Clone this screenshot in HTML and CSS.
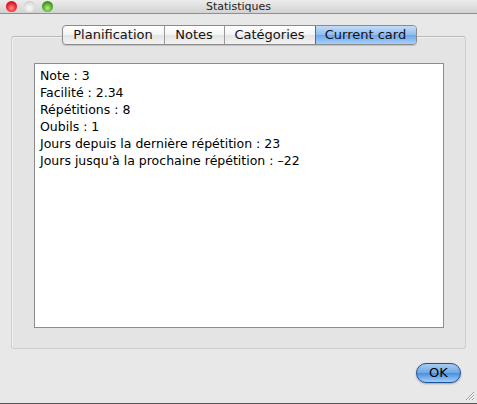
FILE: index.html
```html
<!DOCTYPE html>
<html>
<head>
<meta charset="utf-8">
<link rel="stylesheet" href="styles.css">
</head>
<body>
<div class="window">
  <div class="titlebar">
    <div class="lights">
      <span class="light red"></span>
      <span class="light gray"></span>
      <span class="light green"></span>
    </div>
    <div class="title">Statistiques</div>
  </div>
  <div class="body">
    <div class="tabs">
      <div class="tab t1">Planification</div>
      <div class="tab t2">Notes</div>
      <div class="tab t3">Catégories</div>
      <div class="tab t4 active">Current card</div>
    </div>
    <div class="group">
      <div class="textarea">
        <div>Note : 3</div>
        <div>Facilité : 2.34</div>
        <div>Répétitions : 8</div>
        <div>Oubils : 1</div>
        <div>Jours depuis la dernière répétition : 23</div>
        <div>Jours jusqu'à la prochaine répétition : –22</div>
      </div>
    </div>
    <div class="footer">
      <button class="ok">OK</button>
    </div>
  </div>
  <div class="grip">
    <svg width="12" height="12" viewBox="0 0 12 12">
      <path d="M11 3 L3 11 M11 6 L6 11 M11 9 L9 11" stroke="#9a9a9a" stroke-width="1" fill="none"/>
      <path d="M11 4 L4 11 M11 7 L7 11 M11 10 L10 11" stroke="#ffffff" stroke-width="1" fill="none"/>
    </svg>
  </div>
</div>
</body>
</html>
```

FILE: styles.css
```css
* { box-sizing: border-box; }
html, body { margin: 0; padding: 0; }
body {
  width: 477px;
  height: 404px;
  overflow: hidden;
  background: #e8e8e8;
  font-family: "DejaVu Sans", "Liberation Sans", sans-serif;
  font-size: 12px;
  color: #000;
}
.window {
  position: relative;
  width: 477px;
  height: 404px;
  display: flex;
  flex-direction: column;
  border-bottom: 1px solid #555;
}
.titlebar {
  height: 14px;
  background: linear-gradient(#ececec, #d2d2d2);
  border-bottom: 1px solid #8f8f8f;
  display: flex;
  align-items: center;
  position: relative;
}
.lights {
  display: flex;
  gap: 7px;
  padding-left: 6px;
}
.light {
  width: 11px;
  height: 11px;
  border-radius: 50%;
  display: block;
}
.red { background: radial-gradient(circle at 50% 65%, #ff8a8a 0%, #e0222a 55%, #9a0c10 100%); }
.gray { background: radial-gradient(circle at 50% 65%, #fafafa 0%, #dedede 60%, #a8a8a8 100%); }
.green { background: radial-gradient(circle at 50% 65%, #b8f07a 0%, #4ca42a 55%, #256a10 100%); }
.title {
  position: absolute;
  left: 0;
  right: 0;
  top: 0;
  text-align: center;
  font-size: 11px;
  line-height: 13px;
  color: #222;
}
.body {
  flex: 1;
  display: flex;
  flex-direction: column;
  padding: 11px 11px 0 11px;
}
.tabs {
  display: flex;
  align-self: center;
  height: 20px;
  margin-left: 1px;
  position: relative;
  z-index: 2;
  border: 1px solid #8a8a8a;
  border-radius: 4px;
  background: linear-gradient(#ffffff, #f3f3f3 50%, #e4e4e4 51%, #f2f2f2);
  box-shadow: 0 1px 1px rgba(0,0,0,0.15);
  overflow: hidden;
}
.tab {
  font-size: 13px;
  line-height: 18px;
  text-align: center;
  border-left: 1px solid #9a9a9a;
  color: #111;
}
.t1 { width: 101px; border-left: none; }
.t2 { width: 60px; }
.t3 { width: 91px; }
.t4 { width: 101px; }
.tab.active {
  background: linear-gradient(#c3dcf8, #8fbcf0 50%, #6ea7ec 51%, #a5d0fa);
  border-left: 1px solid #3d6fb8;
}
.group {
  margin-top: -9px;
  height: 313px;
  border: 1px solid #cfcfcf;
  border-top-color: #b8b8b8;
  border-radius: 3px;
  background: #e4e4e4;
  padding: 26px 21px 20px 22px;
  box-shadow: inset 1px 1px 0 #f2f2f2;
}
.textarea {
  height: 265px;
  background: #fff;
  border: 1px solid #8c8c8c;
  padding: 3px 5px;
  line-height: 17px;
  font-size: 12.5px;
}
.footer {
  display: flex;
  justify-content: flex-end;
  padding-top: 14px;
  padding-right: 5px;
}
.ok {
  width: 45px;
  height: 20px;
  border-radius: 10px;
  border: 1px solid #1f4f93;
  background: linear-gradient(#a8cdf4, #6ca6e6 50%, #4a8ee0 51%, #9fd0fb);
  font-family: "DejaVu Sans", "Liberation Sans", sans-serif;
  font-size: 13px;
  line-height: 18px;
  padding: 0;
  color: #000;
  box-shadow: 0 1px 2px rgba(0,0,0,0.3);
}
.grip {
  position: absolute;
  right: 2px;
  bottom: 2px;
  width: 12px;
  height: 12px;
}
.grip svg { display: block; }
```
